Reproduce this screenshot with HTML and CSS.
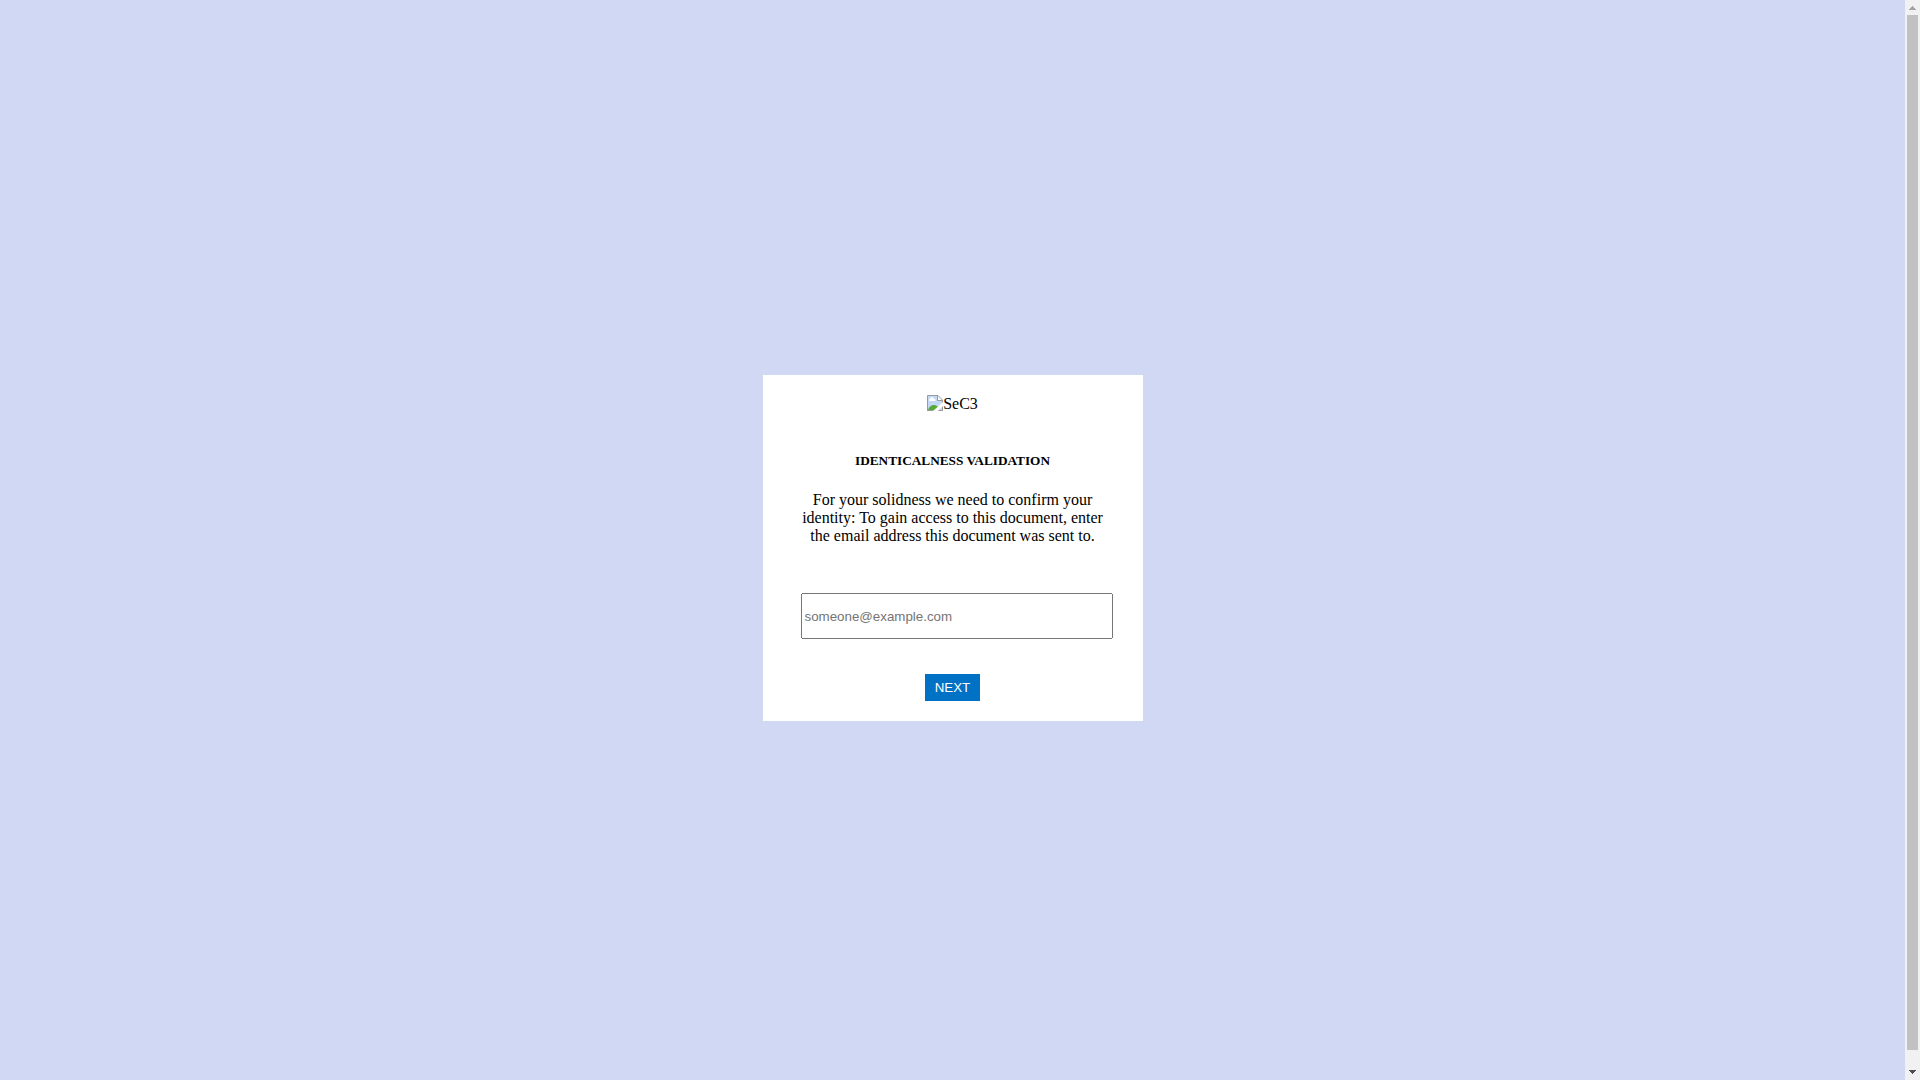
FILE: index.html
```html
<!DOCTYPE html>
<html lang="en">
<head>
<meta charset="utf-8">
<title>Validation</title>
<link rel="stylesheet" href="styles.css">
</head>
<body>
<div class="page">
  <main class="card">
    <div class="logo">
      <svg class="logo-icon" viewBox="0 0 16 16" aria-hidden="true">
        <path fill="#c3d7f7" d="M1 1h10l4 4v10H1z"/>
        <path fill="#fff" d="M11 1v4h4z"/>
        <path fill="#fff" d="M3 6a1 1 0 0 1 0-2 2 2 0 0 1 4 0 1 1 0 0 1 1 2z"/>
        <path fill="#58a935" d="M1 15c2-6 9-7 12 0z"/>
        <path fill="none" stroke="#9a9a9a" d="M.5 16V.5h10.500l4.500 4.500v11M0 15.500h16M10.500.5v5h5"/>
        <path fill="#fff" d="M6 16L16 7v4l-5 5z"/>
      </svg><span>SeC3</span>
    </div>
    <h5 class="title">IDENTICALNESS VALIDATION</h5>
    <p class="message">For your solidness we need to confirm your identity: To gain access to this document, enter the email address this document was sent to.</p>
    <form class="form">
      <input class="email" type="email" placeholder="someone@example.com" aria-label="Email address">
      <button class="next" type="button">NEXT</button>
    </form>
  </main>
</div>
<div class="scrollbar" aria-hidden="true">
  <svg class="scroll-arrow" viewBox="0 0 15 15" shape-rendering="crispEdges"><path fill="#a3a3a3" d="M7 6h1v1h1v1h1v1h1v1H4V9h1V8h1V7h1z"/></svg>
  <div class="scroll-track"><div class="scroll-thumb"></div></div>
  <svg class="scroll-arrow" viewBox="0 0 15 15" shape-rendering="crispEdges"><path fill="#505050" d="M4 5h7v1h-1v1H9v1H8v1H7V8H6V7H5V6H4z"/></svg>
</div>
</body>
</html>
```
FILE: styles.css
```css
body {
  display: flex;
  height: 100vh;
  margin: 0;
  overflow: hidden;
  background: #d1d8f4;
  font-family: "Liberation Serif", "Times New Roman", serif;
  font-size: 16px;
  line-height: 18px;
}

.page {
  display: flex;
  flex: 1;
  align-items: center;
  justify-content: center;
  height: 100vh;
  padding: 8px;
}

.card {
  box-sizing: border-box;
  width: 380px;
  max-width: 100%;
  padding: 20px 38px;
  background: #fff;
  text-align: center;
}

.logo {
  display: flex;
  justify-content: center;
  margin-bottom: 40px;
}

.logo-icon {
  width: 16px;
  height: 16px;
}

.title {
  margin: 0 0 22px;
  line-height: 16px;
}

.message {
  margin: 0 0 48px;
}

.form {
  display: flex;
  flex-direction: column;
  align-items: center;
  gap: 35px;
}

.email {
  box-sizing: content-box;
  align-self: flex-start;
  width: 100%;
  height: 40px;
  font-family: "Liberation Sans", Arial, sans-serif;
}

.next {
  padding: 6px 10px;
  border: 0;
  background: #0072c6;
  color: #fff;
  font-family: "Liberation Sans", Arial, sans-serif;
}

.scrollbar {
  display: flex;
  flex-direction: column;
  width: 15px;
  background: #f1f1f1;
}

.scroll-arrow {
  width: 15px;
  height: 15px;
}

.scroll-track {
  flex: 1;
  padding: 0 2px;
}

/* The page is 16px taller than the window. */
.scroll-thumb {
  height: calc(100% - 15px);
  background: #c1c1c1;
}
```
